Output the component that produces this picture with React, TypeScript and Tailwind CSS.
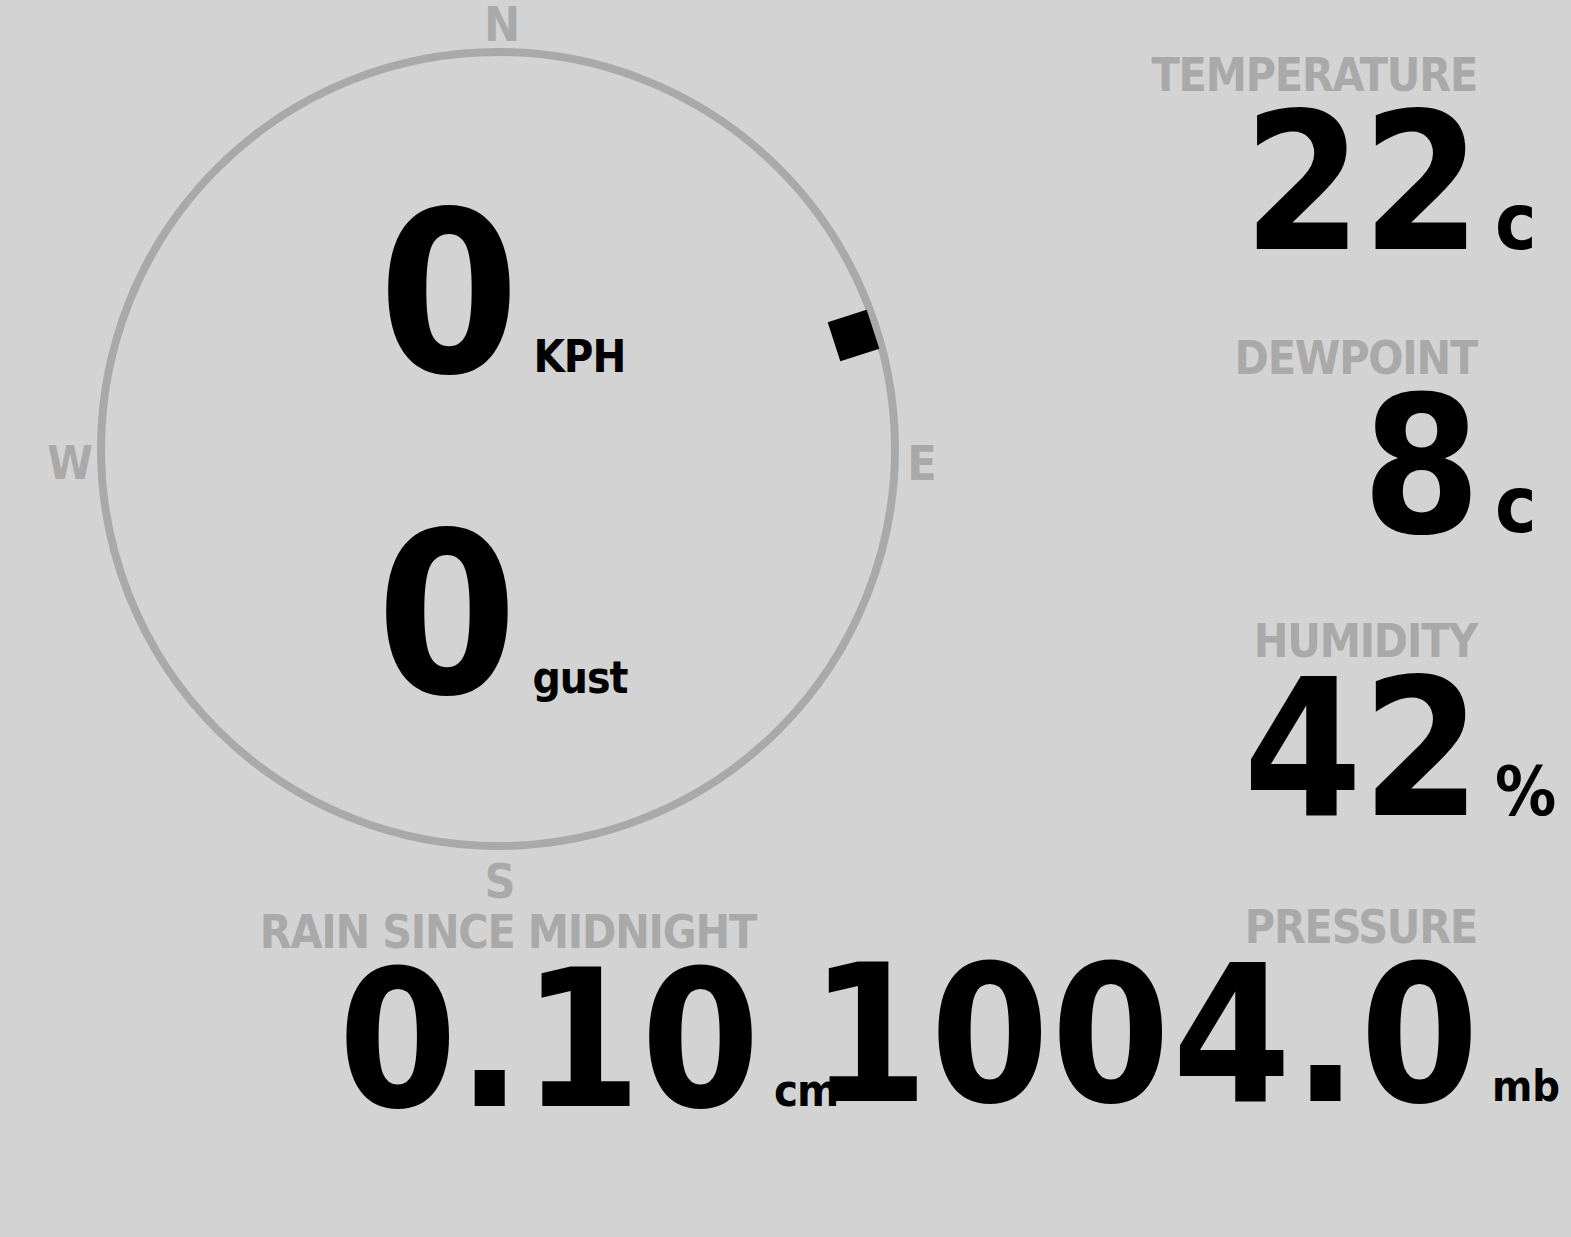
import React from 'react';

const FONT = "font-['DejaVu_Sans_Condensed','DejaVu_Sans',sans-serif] [font-stretch:condensed] font-bold";

interface StatProps {
  label: string;
  value: string;
  unit: string;
  unitClass: string;
  unitWidth: string;
  valueClass?: string;
}

function Stat({ label, value, unit, unitClass, unitWidth, valueClass = '' }: StatProps) {
  return (
    <div className="grid grid-cols-[auto_auto] items-baseline">
      <div className="mr-[4px] text-right text-[46px] leading-none tracking-[-1.2px] text-[#a9a9a9]">{label}</div>
      <div />
      <div className={`mt-[10px] text-right text-[190px] leading-[0.8] text-black ${valueClass}`}>{value}</div>
      <div className={`${unitWidth} leading-none text-black ${unitClass}`}>{unit}</div>
    </div>
  );
}

function Compass() {
  return (
    <div className="relative flex h-[900px] w-[1000px] shrink-0 flex-col items-center pl-[4px] pt-[182px]">
      <svg className="absolute inset-0" width="1000" height="900" viewBox="0 0 1000 900">
        <circle cx="498" cy="449" r="397" fill="none" stroke="#a9a9a9" strokeWidth="8" />
        <rect x="833" y="315" width="41" height="41" fill="#000" transform="rotate(-18 853.5 335.5)" />
      </svg>

      <span className="absolute left-[502px] top-0 -translate-x-1/2 text-[48px] leading-none text-[#a9a9a9]">N</span>
      <span className="absolute left-[70px] top-[440px] -translate-x-1/2 text-[46px] leading-none text-[#a9a9a9]">W</span>
      <span className="absolute left-[922px] top-[439px] -translate-x-1/2 text-[48px] leading-none text-[#a9a9a9]">E</span>
      <span className="absolute left-[500px] top-[857px] -translate-x-1/2 text-[48px] leading-none text-[#a9a9a9]">S</span>

      <div className="relative flex items-baseline">
        <span className="text-[225px] leading-none">0</span>
        <span className="ml-[14px] text-[45px] leading-none tracking-[-1px]">KPH</span>
      </div>
      <div className="relative mt-[96px] flex items-baseline">
        <span className="text-[225px] leading-none">0</span>
        <span className="ml-[15px] text-[44px] leading-none tracking-[-1px]">gust</span>
      </div>
    </div>
  );
}

export default function App() {
  return (
    <div className={`h-[1237px] w-[1571px] overflow-hidden bg-[#d3d3d3] text-black ${FONT}`}>
      <div className="flex">
        <Compass />
        <div className="flex flex-1 flex-col items-end gap-[74px] pt-[52px]">
          <Stat label="TEMPERATURE" value="22" unit="c" unitClass="pl-[14px] text-[78px]" unitWidth="w-[90px]" />
          <Stat label="DEWPOINT" value="8" unit="c" unitClass="pl-[14px] text-[78px]" unitWidth="w-[90px]" />
          <Stat label="HUMIDITY" value="42" unit="%" unitClass="pl-[14px] text-[68px]" unitWidth="w-[90px]" />
        </div>
      </div>

      <div className="flex items-start pt-[4px]">
        <div className="flex w-[800px] shrink-0 justify-end pt-[5px]">
          <Stat
            label="RAIN SINCE MIDNIGHT"
            value="0.10"
            unit="cm"
            unitClass="pl-[14px] text-[45px] tracking-[-1px]"
            unitWidth="w-[40px]"
          />
        </div>
        <div className="flex min-w-0 flex-1 justify-end">
          <Stat
            label="PRESSURE"
            value="1004.0"
            unit="mb"
            unitClass="pl-[11px] text-[43px]"
            unitWidth="w-[90px]"
            valueClass="tracking-[2px]"
          />
        </div>
      </div>
    </div>
  );
}
